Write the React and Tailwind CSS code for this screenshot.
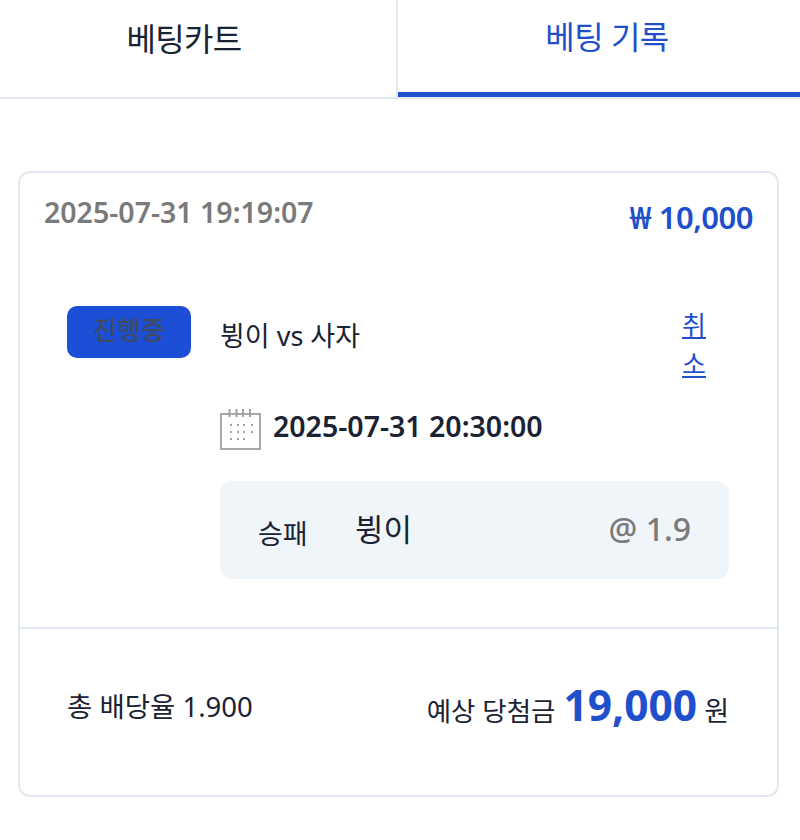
import React from 'react';

const CalendarIcon = () => (
    <svg width="42" height="42" viewBox="0 0 42 42" fill="none" className="shrink-0">
        <rect x="1" y="6" width="39" height="35" stroke="#a8a8a8" strokeWidth="2" />
        <path d="M9.5 1v8M16.5 1v8M23 1v8M30 1v8" stroke="#a0a0a0" strokeWidth="2" />
        <path
            d="M10 17h2M17 17h2M23 17h2M31 17h2M10 24h2M17 24h2M23 24h2M31 24h2M10 31h2M17 31h2M23 31h2"
            stroke="#a0a0a0"
            strokeWidth="2"
        />
    </svg>
);

const App = () => {
    return (
        <div className="w-[800px] h-[840px] bg-white overflow-hidden text-[#1a2233] font-['Noto_Sans','Noto_Sans_CJK_KR',sans-serif]">
            <div className="flex h-[99px] border-b-2 border-[#e2e8f0]">
                <div className="w-[398px] border-r-2 border-[#e2e8f0] flex justify-center pt-[15px] pr-[28px] text-[32px] leading-[48px] -tracking-[0.7px]">
                    베팅카트
                </div>
                <div className="flex-1 -mb-[2px] h-[97px] border-b-[5px] border-[#1f4fcb] flex justify-center pt-[13px] pl-[16px] text-[32px] leading-[48px] text-[#1f4fcb] -tracking-[0.5px]">
                    베팅 기록
                </div>
            </div>

            <div className="ml-[18px] mt-[72px] w-[761px] h-[626px] border-2 border-[#e2e8f0] rounded-[12px] flex flex-col">
                <div className="flex justify-between pl-[24px] pr-[24px] pt-[20px]">
                    <span className="text-[28.5px] leading-[38px] font-semibold text-[#7a7a7a]">
                        2025-07-31 19:19:07
                    </span>
                    <span className="mt-[4px] mb-[2px] text-[31px] leading-[40px] font-semibold text-[#1f4fcb] -tracking-[0.5px]">
                        ₩ 10,000
                    </span>
                </div>

                <div className="flex pl-[47px] pr-[48px] pt-[67px]">
                    <div className="w-[124px] h-[52px] shrink-0 bg-[#1c4fd6] rounded-[10px] text-center text-[26px] leading-[48px] font-medium text-[#3f4a63]">
                        진행중
                    </div>
                    <div className="ml-[29px] flex-1 min-w-0">
                        <div className="flex justify-between">
                            <span className="mt-[10px] text-[27px] leading-[40px]">뷩이 vs 사자</span>
                            <a className="w-[24px] mr-[23px] text-[26px] leading-[39px] text-[#1f4fcb] underline text-center">
                                취소
                            </a>
                        </div>
                        <div className="flex items-center gap-[11px] mt-[24px]">
                            <CalendarIcon />
                            <span className="text-[28.5px] leading-[38px] font-semibold -mt-[7px]">
                                2025-07-31 20:30:00
                            </span>
                        </div>
                        <div className="mt-[31px] h-[98px] bg-[#f0f5fa] rounded-[12px] flex justify-between pl-[38px] pr-[38px]">
                            <div className="flex">
                                <span className="mt-[34px] text-[27px] leading-[38px] w-[97px]">승패</span>
                                <span className="mt-[27px] text-[31px] leading-[42px]">뷩이</span>
                            </div>
                            <span className="mt-[28px] text-[32px] leading-[40px] font-medium text-[#7a7a7a]">@ 1.9</span>
                        </div>
                    </div>
                </div>

                <div className="mt-[48px] border-t-2 border-[#e2e8f0] flex-1 flex justify-between pl-[47px] pr-[48px] pt-[52px]">
                    <span className="mt-[6px] text-[27.5px] leading-[40px]">총 배당율 1.900</span>
                    <div className="flex items-baseline -mt-[2px]">
                        <span className="text-[26.5px]">예상 당첨금</span>
                        <span className="ml-[8px] mr-[7px] text-[42.5px] leading-[52px] font-bold text-[#1f4fcb]">19,000</span>
                        <span className="text-[27px]">원</span>
                    </div>
                </div>
            </div>
        </div>
    );
};

export default App;
